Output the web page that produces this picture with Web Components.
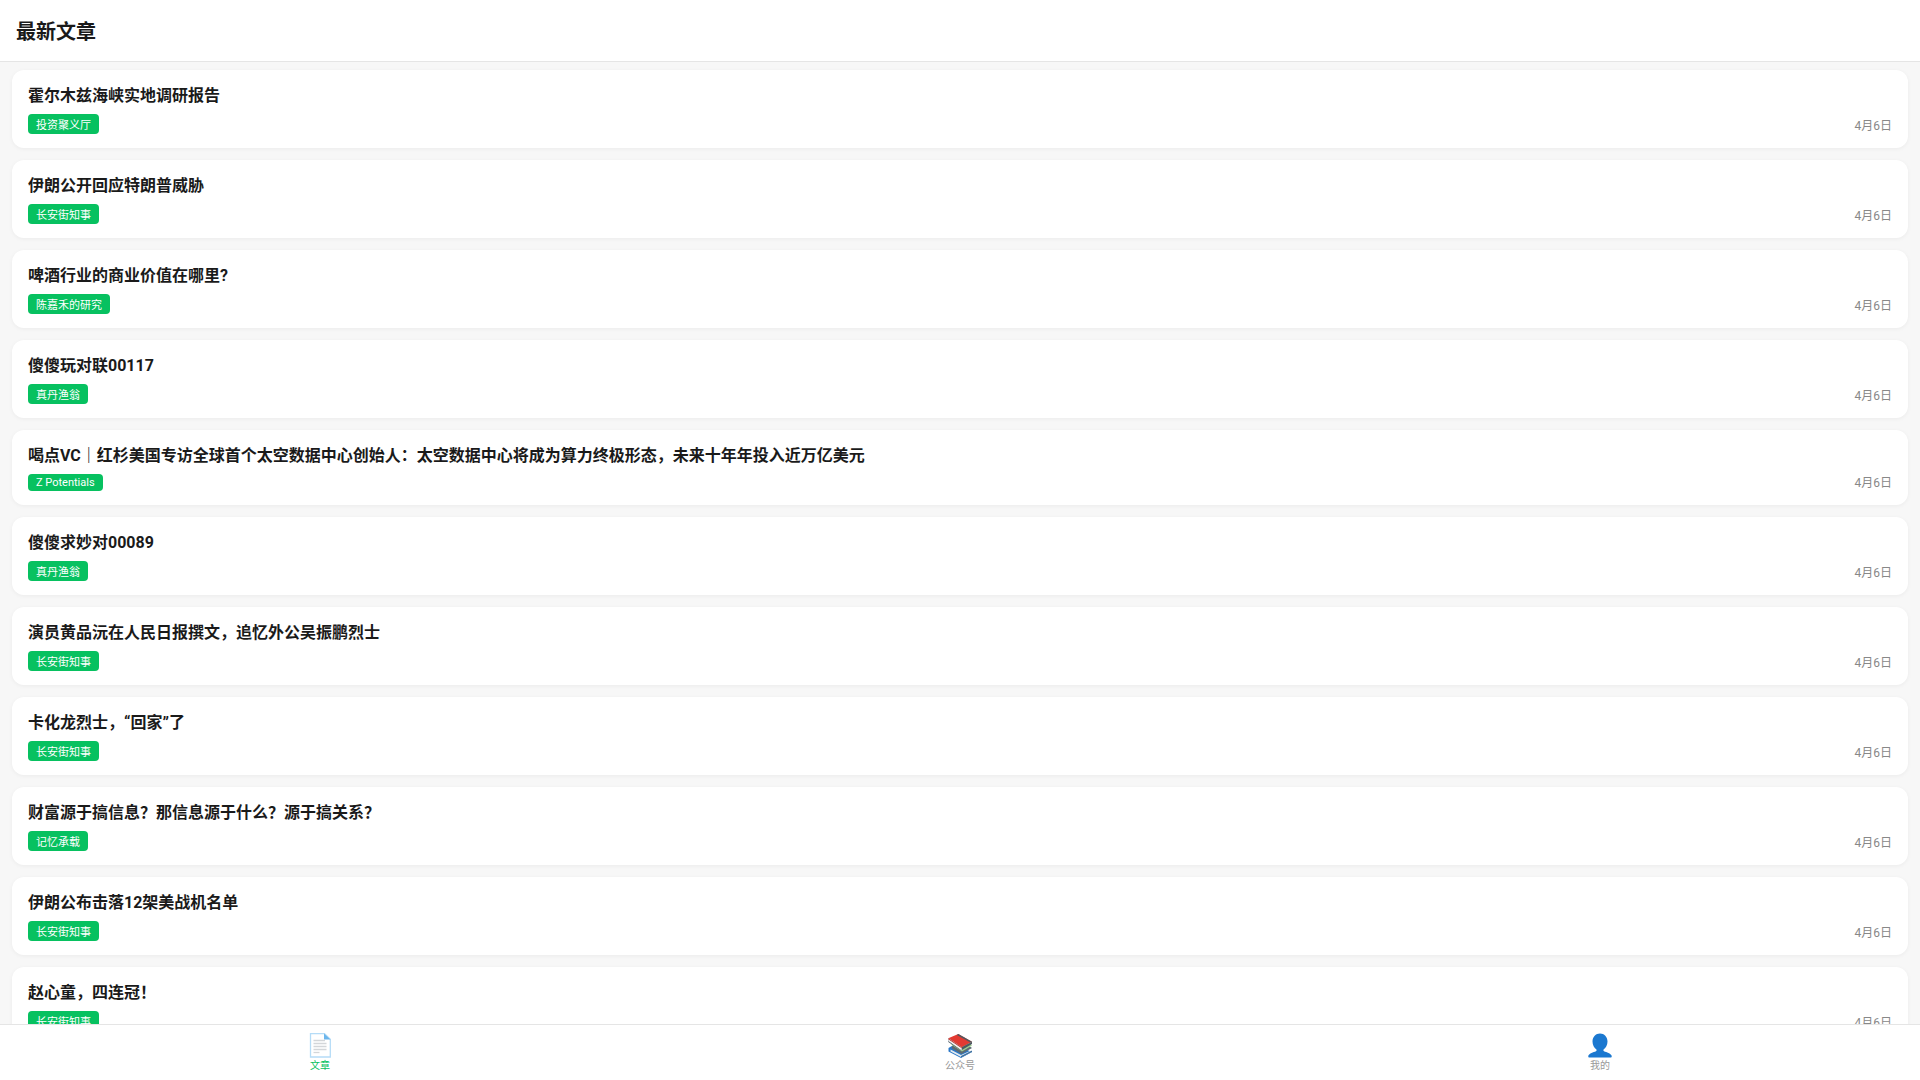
<!DOCTYPE html>
<html lang="zh-CN">
<head>
<meta charset="utf-8">
<title>最新文章</title>
<style>
  html, body { margin: 0; height: 100%; }
  body { font-family: Roboto, "Noto Sans CJK SC", sans-serif; background: #f7f7f7; }
</style>
</head>
<body>
<news-app></news-app>

<template id="tab-icons">
  <svg data-icon="doc" viewBox="0 0 24 26" width="24" height="26">
    <path d="M2.500 .7h14l5.800 5.600v17.700h-19.800z" fill="#fff" stroke="#b5dcf7" stroke-width="1.300"/>
    <path d="M16 .5l6.500 6h-6.500z" fill="#6cb6ec"/>
    <path d="M5.500 7.500h11.500M5.500 10.500h13M5.500 13.500h13M5.500 16.500h13" stroke="#d3d6d9" stroke-width="1.300"/>
    <path d="M5.500 19.500h6" stroke="#d3d6d9" stroke-width="1.300"/>
  </svg>
  <svg data-icon="books" viewBox="0 0 24 26" width="24" height="26">
    <path d="M.5 15l6-3.500 17.500 7.500-11 6-12.500-6.500z" fill="#2a78c8"/>
    <path d="M2.500 16.500l10.500 5.500 10-4.500v2l-10 4.500-10.500-5.500z" fill="#e4eaee"/>
    <path d="M13 24.500l11-5.500v-1.500l-11 5.500z" fill="#3c6f9e"/>
    <path d="M4 13l10-5 10 7-10.500 6-9.500-5.500z" fill="#5d6b72"/>
    <path d="M3 11.500l11-5 10 6-10 6z" fill="#9ed18f"/>
    <path d="M.3 5.300l10-4.300 13.700 7.700-10.300 5.600z" fill="#e33a32"/>
    <path d="M10.300 1l13.700 7.700-1.500.8-13.700-7.500z" fill="#4d5a61"/>
    <path d="M.3 5.300l13.400 9 10.300-5.600v2.300l-11 6.500-12.700-8.500z" fill="#4d5a61"/>
    <path d="M.3 5.300l13.400 9v3.200l-13.400-9.500z" fill="#f2f4f5"/>
    <path d="M.3 5.300l13.400 9v1l-13.400-9z" fill="#bf2b25"/>
  </svg>
  <svg data-icon="user" viewBox="0 0 26 26" width="26" height="26">
    <path d="M13 .5c4.200 0 7.500 3.300 7.500 8.100 0 3.700-1.800 6.500-3.700 7.700-.6.400-.6 1.500.2 1.900 2.700 1.100 6.700 2 7.700 4.600.3.800-.3 1.800-1 1.800h-21.400c-.7 0-1.300-1-1-1.800 1-2.600 5-3.500 7.700-4.600.8-.4.800-1.500.2-1.900-1.900-1.200-3.700-4-3.700-7.700 0-4.800 3.300-8.100 7.500-8.100z" fill="#1b78d0"/>
  </svg>
</template>

<script>
const ARTICLES = [
  ['霍尔木兹海峡实地调研报告', '投资聚义厅'],
  ['伊朗公开回应特朗普威胁', '长安街知事'],
  ['啤酒行业的商业价值在哪里?', '陈嘉禾的研究'],
  ['傻傻玩对联00117', '真丹渔翁'],
  ['喝点VC｜红杉美国专访全球首个太空数据中心创始人：太空数据中心将成为算力终极形态，未来十年年投入近万亿美元', 'Z Potentials'],
  ['傻傻求妙对00089', '真丹渔翁'],
  ['演员黄品沅在人民日报撰文，追忆外公吴振鹏烈士', '长安街知事'],
  ['卡化龙烈士，“回家”了', '长安街知事'],
  ['财富源于搞信息？那信息源于什么？源于搞关系？', '记忆承载'],
  ['伊朗公布击落12架美战机名单', '长安街知事'],
  ['赵心童，四连冠！', '长安街知事']
];

class PageHeader extends HTMLElement {
  constructor() {
    super();
    this.attachShadow({mode: 'open'});
    this.shadowRoot.innerHTML = `
      <style>
        :host {
          display: flex;
          align-items: center;
          flex: none;
          height: 61px;
          padding: 0 16px;
          background: #fff;
          border-bottom: 1px solid #e5e5e5;
        }
        h1 { margin: 0; font-size: 20px; font-weight: 700; color: #1a1a1a; }
      </style>
      <h1><slot></slot></h1>
    `;
  }
}

class ArticleCard extends HTMLElement {
  constructor() {
    super();
    this.attachShadow({mode: 'open'});
    this.shadowRoot.innerHTML = `
      <style>
        :host {
          display: flex;
          flex: none;
          justify-content: space-between;
          align-items: flex-end;
          padding: 12px 16px 14px;
          background: #fff;
          border-radius: 12px;
          box-shadow: 0 1px 4px rgba(0,0,0,0.05);
        }
        .main { display: flex; flex-direction: column; align-items: flex-start; gap: 8px; }
        .title { font-size: 16px; font-weight: 700; color: #1a1a1a; }
        .tag {
          padding: 2px 8px;
          font-size: 11px;
          color: #fff;
          background: #07c160;
          border-radius: 4px;
        }
        .date { font-size: 12px; color: #888; margin-bottom: 1px; }
      </style>
      <div class="main">
        <div class="title"><slot name="title"></slot></div>
        <div class="tag"><slot name="tag"></slot></div>
      </div>
      <span class="date"><slot name="date"></slot></span>
    `;
  }
}

class TabItem extends HTMLElement {
  constructor() {
    super();
    this.attachShadow({mode: 'open'});
    this.shadowRoot.innerHTML = `
      <style>
        :host {
          display: flex;
          flex: 1;
          flex-direction: column;
          align-items: center;
          padding-top: 8px;
          font-size: 10px;
          color: #999;
        }
        :host([active]) { color: #07c160; }
        .icon { display: flex; justify-content: center; align-items: flex-start; height: 24px; }
      </style>
      <div class="icon"><slot name="icon"></slot></div>
      <slot></slot>
    `;
  }
}

class TabBar extends HTMLElement {
  constructor() {
    super();
    this.attachShadow({mode: 'open'});
    this.shadowRoot.innerHTML = `
      <style>
        :host {
          display: flex;
          flex: none;
          height: 55px;
          background: #fff;
          border-top: 1px solid #e5e5e5;
        }
      </style>
      <slot></slot>
    `;
  }
}

class NewsApp extends HTMLElement {
  constructor() {
    super();
    this.attachShadow({mode: 'open'});
    this.shadowRoot.innerHTML = `
      <style>
        :host { display: flex; flex-direction: column; height: 100vh; overflow: hidden; }
        main {
          flex: 1;
          min-height: 0;
          overflow: hidden;
          display: flex;
          flex-direction: column;
          gap: 12px;
          padding: 8px 12px;
        }
      </style>
      <page-header>最新文章</page-header>
      <main></main>
      <tab-bar></tab-bar>
    `;
  }

  connectedCallback() {
    const main = this.shadowRoot.querySelector('main');
    ARTICLES.forEach(([title, tag]) => {
      const card = document.createElement('article-card');
      card.innerHTML = `<span slot="title">${title}</span><span slot="tag">${tag}</span><span slot="date">4月6日</span>`;
      main.appendChild(card);
    });
    const icons = document.querySelector('#tab-icons').content;
    const bar = this.shadowRoot.querySelector('tab-bar');
    [['doc', '文章', true], ['books', '公众号', false], ['user', '我的', false]].forEach(([icon, label, active]) => {
      const item = document.createElement('tab-item');
      if (active) item.setAttribute('active', '');
      const svg = icons.querySelector(`[data-icon="${icon}"]`).cloneNode(true);
      svg.setAttribute('slot', 'icon');
      item.appendChild(svg);
      item.appendChild(document.createTextNode(label));
      bar.appendChild(item);
    });
  }
}

customElements.define('page-header', PageHeader);
customElements.define('article-card', ArticleCard);
customElements.define('tab-item', TabItem);
customElements.define('tab-bar', TabBar);
customElements.define('news-app', NewsApp);
</script>
</body>
</html>
